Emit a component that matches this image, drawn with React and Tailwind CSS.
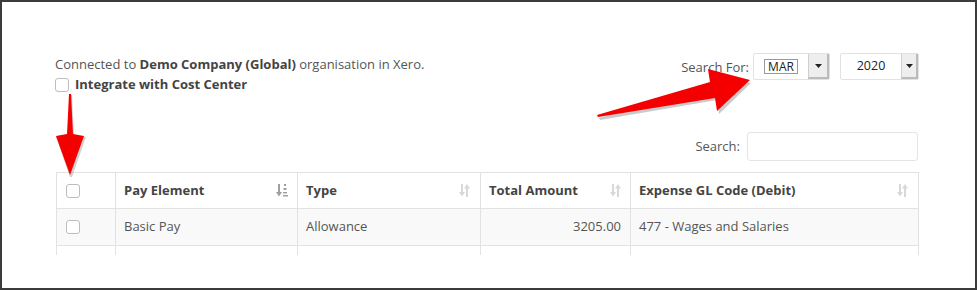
import React from "react";

function SortBoth() {
  return (
    <svg width="11" height="13" viewBox="0 0 11 13" className="shrink-0">
      <g fill="#d8d8d8">
        <rect x="2" y="0" width="2" height="10" />
        <polygon points="0,8 6,8 3,12.5" />
        <rect x="7" y="3" width="2" height="10" />
        <polygon points="5,4.5 11,4.5 8,0" />
      </g>
    </svg>
  );
}

function SortAsc() {
  return (
    <svg width="13" height="13" viewBox="0 0 13 13" className="shrink-0">
      <g fill="#a0a0a0">
        <rect x="2" y="0" width="2" height="10" />
        <polygon points="0,8 6,8 3,12.5" />
        <rect x="8" y="0" width="2" height="2" />
        <rect x="7.5" y="4" width="3" height="2" />
        <rect x="7" y="8" width="4" height="1.5" />
        <rect x="7" y="11" width="5" height="1.5" />
      </g>
    </svg>
  );
}

function Check() {
  return <span className="inline-block w-[14px] h-[14px] rounded-[3px] border border-[#bdbdbd] bg-white" />;
}

function Caret() {
  return (
    <svg width="7" height="4" viewBox="0 0 7 4">
      <polygon points="0,0 7,0 3.5,4" fill="#222" />
    </svg>
  );
}

export default function App() {
  const font = { fontFamily: '"Open Sans", "Noto Sans", sans-serif' };
  return (
    <div className="w-[977px] h-[291px] bg-white" style={font}>
      <div className="relative w-[977px] h-[290px] border-2 border-[#3c3c3c] bg-white overflow-hidden text-[#555] text-[13px]">
        <div className="pt-[51px] pl-[53px] pr-[56px]">
          <div className="flex justify-between">
            <div>
              <div className="h-[20px] leading-[20px] mt-px">
                Connected to <b className="text-[#444]">Demo Company (Global)</b> organisation in Xero.
              </div>
              <div className="h-[20px] flex items-center gap-[6px] mt-px">
                <Check />
                <b className="text-[#444]">Integrate with Cost Center</b>
              </div>
            </div>
            <div className="flex items-start">
              <span className="leading-[27px] mr-[4px] mt-px">Search For:</span>
              <div className="flex h-[27px] w-[77px] border border-[#e2e2e2] rounded-[2px] bg-white">
                <div className="flex-1 flex items-center justify-center">
                  <span className="border border-[#999] px-[3px] leading-[13px] text-[12px] text-[#222]">MAR</span>
                </div>
                <div className="w-[21px] flex items-center justify-center bg-[#eeeeee] border-l border-[#cfcfcf] border-r-2 border-b-2 border-r-[#bbb] border-b-[#bbb]">
                  <Caret />
                </div>
              </div>
              <div className="flex h-[27px] w-[79px] ml-[10px] border border-[#e2e2e2] rounded-[2px] bg-white">
                <div className="flex-1 flex items-center justify-center text-[12.5px] text-[#222]">2020</div>
                <div className="w-[17px] flex items-center justify-center bg-[#eeeeee] border-l border-[#cfcfcf] border-r-2 border-b-2 border-r-[#bbb] border-b-[#bbb]">
                  <Caret />
                </div>
              </div>
            </div>
          </div>
          <div className="flex justify-end items-center mt-[37px] pr-[1px]">
            <span className="mr-[7px]">Search:</span>
            <div className="w-[171px] h-[29px] border border-[#e4e4e4] rounded-[3px] bg-white" />
          </div>
          <div className="mt-[11px] ml-[1px] h-[83px] overflow-hidden">
            <div className="border border-[#e2e2e2]">
              <div className="flex h-[36px] border-b border-[#e2e2e2] bg-white font-bold text-[#444]">
                <div className="w-[59px] flex items-center pl-[9px] border-r border-[#e2e2e2]"><Check /></div>
                <div className="w-[182px] flex items-center justify-between pl-[8px] pr-[8px] border-r border-[#e2e2e2]"><span>Pay Element</span><SortAsc /></div>
                <div className="w-[183px] flex items-center justify-between pl-[8px] pr-[10px] border-r border-[#e2e2e2]"><span>Type</span><SortBoth /></div>
                <div className="w-[150px] flex items-center justify-between pl-[8px] pr-[9px] border-r border-[#e2e2e2]"><span>Total Amount</span><SortBoth /></div>
                <div className="flex-1 flex items-center justify-between pl-[8px] pr-[10px]"><span>Expense GL Code (Debit)</span><SortBoth /></div>
              </div>
              <div className="flex h-[37px] border-b border-[#e2e2e2] bg-[#f9f9f9] text-[#555]">
                <div className="w-[59px] flex items-center pl-[9px] border-r border-[#e2e2e2]"><Check /></div>
                <div className="w-[182px] flex items-center pl-[8px] border-r border-[#e2e2e2]">Basic Pay</div>
                <div className="w-[183px] flex items-center pl-[8px] border-r border-[#e2e2e2]">Allowance</div>
                <div className="w-[150px] flex items-center justify-end pr-[9px] border-r border-[#e2e2e2]">3205.00</div>
                <div className="flex-1 flex items-center pl-[8px]">477 - Wages and Salaries</div>
              </div>
              <div className="flex h-[36px] bg-white">
                <div className="w-[59px] border-r border-[#e2e2e2]" />
                <div className="w-[182px] border-r border-[#e2e2e2]" />
                <div className="w-[183px] border-r border-[#e2e2e2]" />
                <div className="w-[150px] border-r border-[#e2e2e2]" />
                <div className="flex-1" />
              </div>
            </div>
          </div>
        </div>

        {/* Down arrow overlay */}
        <svg className="absolute left-[48px] top-[92px]" width="40" height="84" viewBox="0 0 40 84">
          <polygon points="19,0 21,0 23,40 35,42 21,82 19,82 5,42 17,40" fill="#9a9a9a" opacity="0.45" transform="translate(1,1)" />
          <polygon points="19,0 21,0 23,40 34,42 20,81 6,42 17,40" fill="#f40000" />
        </svg>

        {/* Diagonal arrow overlay */}
        <svg className="absolute left-[590px] top-[60px]" width="170" height="60" viewBox="0 0 170 60">
          <polygon points="6,54 118,22 116,8 158,19 126,50 124,36 7,56" fill="#8a8a8a" opacity="0.45" transform="translate(1,2)" />
          <polygon points="5,53 118,20 116,7 158,18 125,49 123,36 6,55" fill="#f40000" />
        </svg>
      </div>
    </div>
  );
}
